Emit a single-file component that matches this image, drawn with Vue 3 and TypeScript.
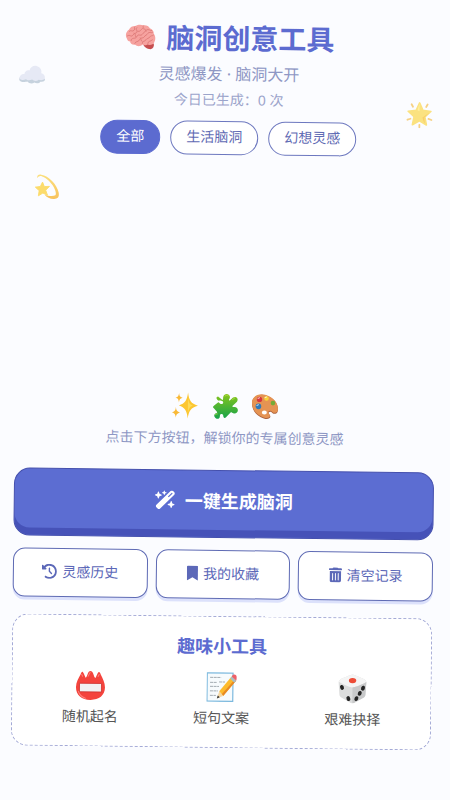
<script setup lang="ts">
import { ref } from 'vue'

const categories: string[] = ['全部', '生活脑洞', '幻想灵感']
const active = ref<string>('全部')
const count = ref<number>(0)

interface Action {
  label: string
  viewBox: string
  path: string
  kind: string
}

const actions: Action[] = [
  {
    label: '灵感历史',
    kind: 'history',
    viewBox: '0 0 512 512',
    path: 'M75 75L41 41C25.900 25.900 0 36.600 0 57.900V168c0 13.300 10.700 24 24 24H134.100c21.400 0 32.100-25.900 17-41l-30.800-30.800C155 85.500 203 64 256 64c106 0 192 86 192 192s-86 192-192 192c-40.800 0-78.600-12.700-109.700-34.400c-14.500-10.100-34.400-6.600-44.600 7.900s-6.600 34.400 7.900 44.600C151.200 495 201.700 512 256 512c141.400 0 256-114.600 256-256S397.400 0 256 0C185.300 0 121.300 28.700 75 75zm181 53c-13.300 0-24 10.700-24 24V256c0 6.400 2.500 12.500 7 17l72 72c9.400 9.400 24.600 9.400 33.900 0s9.400-24.600 0-33.900l-65-65V152c0-13.300-10.700-24-24-24z',
  },
  {
    label: '我的收藏',
    kind: 'bookmark',
    viewBox: '0 0 384 512',
    path: 'M0 512V48C0 21.49 21.49 0 48 0h288c26.51 0 48 21.49 48 48v464L192 400 0 512z',
  },
  {
    label: '清空记录',
    kind: 'trash',
    viewBox: '0 0 448 512',
    path: 'M135.200 17.700L128 32H32C14.300 32 0 46.300 0 64S14.300 96 32 96H416c17.700 0 32-14.300 32-32s-14.300-32-32-32H320l-7.200-14.300C307.400 6.800 296.300 0 284.200 0H163.800c-12.100 0-23.200 6.800-28.600 17.700zM416 128H32V448c0 35.300 28.700 64 64 64H352c35.300 0 64-28.700 64-64V128zM144 208V432c0 8.800-7.200 16-16 16s-16-7.200-16-16V208c0-8.800 7.200-16 16-16s16 7.200 16 16zm96 0V432c0 8.800-7.200 16-16 16s-16-7.200-16-16V208c0-8.800 7.200-16 16-16s16 7.200 16 16zm96 0V432c0 8.800-7.200 16-16 16s-16-7.200-16-16V208c0-8.800 7.200-16 16-16s16 7.200 16 16z',
  },
]

function run(kind: string): void {
  if (kind === 'trash') count.value = 0
}
</script>

<template>
  <main class="page">
    <svg class="deco cloud" viewBox="0 0 28 20" aria-hidden="true">
      <path d="M3 12C1 13 .7 16 3 17c2 1 5 .4 6.500 0 1.500 2 5 2.600 7 .8 2 1.400 5 .8 6-.8 3 .6 5-1 4.500-3z" fill="#c6d2de" />
      <path d="M1.500 14c0-3 2.500-5 5-4.500C6.500 7 9 5 11.500 5.800 12.500 2 16 .5 19 1.500c3.500 1 5 4 4.300 7C26 9 27.500 11.500 26.800 14c-2 1.800-4 1.600-6 1-2 1.800-5 1.500-6.500 0C11 16.500 9 15.500 8 14.800 5 16 3 15.500 1.500 14z" fill="#e6e9f5" />
    </svg>
    <svg class="deco dizzy" viewBox="0 0 28 28" aria-hidden="true">
      <defs>
        <linearGradient id="trail" x1="0" y1="0" x2="0" y2="1">
          <stop offset="0" stop-color="#fbe07e" />
          <stop offset="1" stop-color="#f8c25c" />
        </linearGradient>
      </defs>
      <path d="M3 5C2 2 4 .5 7 1c8 1 17 10 19 19 1 5-1 7-5 7-4 .2-8-2-10-4.500 4 1.500 9 2 11.500.5C25 21 19 7 8 3 6 2 4 2.500 3 5z" fill="url(#trail)" />
      <path d="M8.500 9l2 4.800 5.500-.3-4 4.200 2 5.300-5-2.200-4.800 3 .8-5.600L.8 14.500l5.400-.8z" fill="#fcdc6c" stroke="#fcdc6c" stroke-linejoin="round" />
    </svg>
    <svg class="deco star" viewBox="0 0 28 28" aria-hidden="true">
      <path d="M14 2.500l3.400 7.500 8 1-6 5.500 1.600 8-7-4-7 4 1.600-8-6-5.500 8-1z" fill="#fbe280" stroke="#fbe280" stroke-width="1.600" stroke-linejoin="round" />
      <path d="M17 17c2-1 4-3 7-5l-5 5c0 2 0 4 .5 6-1-1-2-4-2.500-6z" fill="#f8cf6a" />
      <path d="M14 3v8l-2-1z" fill="#fff0a0" />
      <path d="M6 4l1.400 2.500M22 4l-1.400 2.500M2 19.500l3-1M26 19.500l-3-1M14 24.500V27" fill="none" stroke="#f6d184" stroke-width="1.800" stroke-linecap="round" />
    </svg>

    <header class="header">
      <h1 class="title">
        <svg class="brain" viewBox="0 0 34 28" aria-hidden="true">
          <path d="M19 20c2 5 5 7 9 7 3-.5 4-3 3.500-6z" fill="#c64e50" />
          <path d="M2.500 16C0 12 2 8 4.500 6.500 6 3 9 2 11.500 2.200 14 .5 18 .5 20 1.500c3-.5 6 .8 7 3 3 .8 4.500 3.500 4.300 6 2.500 3 2 7 .7 9-1 3-5 3.500-7.500 2.500-2 1.500-4 1-5 .2-2.500 2.500-6.500 2-8 .3C8 23 6 21 6 19c-2 0-3-1.300-3.500-3z" fill="#f6a29f" />
          <path d="M5 8c2-2 3 1 5-1s-1-3 1-4M3 13c3-2 4 2 6-1s3-1 4-3-2-3 0-5M14 8c3 1 3-2 5-3s0-2 1-3M7 18c0-3 3-2 5-3s1-4 4-3 3-2 5-3 1-3 4-3 2 2 4 1M11 21c1-3 4-1 5-4s4-1 5-3 3-2 4-4 4 0 5-1M19 21c0-3 3-2 4-4s3-1 4-3 3-1 4-2M25 21c0-3 3-2 5-4M10 10c2 0 1 2 2 4M20 5c1 1 3 0 3 3M17 15c1 1 0 3 2 4" fill="none" stroke="#de7c7a" stroke-width="1" stroke-linecap="round" />
        </svg>
        <span>脑洞创意工具</span>
      </h1>
      <p class="subtitle">灵感爆发 · 脑洞大开</p>
      <p class="count">今日已生成：{{ count }} 次</p>
      <nav class="tabs">
        <button
          v-for="c in categories"
          :key="c"
          type="button"
          class="tab"
          :class="{ active: active === c }"
          @click="active = c"
        >{{ c }}</button>
      </nav>
    </header>

    <section class="stage">
      <div class="emojis" aria-hidden="true">
        <svg viewBox="0 0 28 28">
          <path d="M17 1c1 8 3 11 10 13-7 2-9 5-10 13-1-8-3-11-9-13 6-2 8-5 9-13z" fill="#fcc630" />
          <path d="M17 5c.5 6 1.500 8 5 9-3 1-4 3-5 8z" fill="#fddb58" />
          <path d="M8 1.500c.4 3 1 4 3.800 4.700C9 7 8.400 8 8 11c-.4-3-1-4-3.800-4.800C7 5.500 7.600 4.500 8 1.500zM5 15.500c.4 3.500 1.200 4.600 4.500 5.500-3.300.8-4.100 2-4.500 5.300C4.600 23 3.800 21.800.8 21c3-.9 3.800-2 4.200-5.500z" fill="#f9b937" />
        </svg>
        <svg viewBox="0 0 28 28">
          <defs>
            <linearGradient id="puzzle" x1="0" y1="0" x2="0" y2="1">
              <stop offset="0" stop-color="#86c51c" />
              <stop offset="1" stop-color="#16a34b" />
            </linearGradient>
          </defs>
          <path d="M7 4.500L11.500 8c1-.5.3-2 .8-3.500C13 2 16 1 18 3c1.500 1.500 1 3.300 0 4.500-.3.800.2 1 .8 1L22 5.500c3-2 6 1 4 4L21.500 14c-.2 1 .5 1 1.500.8 2.500-.3 4 1.200 4 3.200s-2 4-4.500 3.200c-1-.5-2-1.500-2.500-1L15 25.500c-1.500 1-2.500 0-2.500-1.500 0-1.500-1-2.300-2-2-1.500.3-1.300 1.500-1.500 3-.3 2-2.500 2.500-4.300 1C3 24.500 3 22.500 4.500 21.500c1-.6 2-.4 1.800-1.500L2.500 16c-1-1 0-1.600 1-2.600L7 10.500c1-.5 1.500 1 2.800 1.500 1.700.5 3-.8 2.200-2.500-1-1.500-3.500 0-5.500-1.500-1.500-1.500-1.500-3 .5-3.500z" fill="url(#puzzle)" />
          <path d="M14 4c1.500-1.500 3-1 3.500 0M4.500 23c.5-1 1-1 2-1M21.500 7.500L24 5.700" fill="none" stroke="#b4dc45" stroke-width=".8" stroke-linecap="round" />
        </svg>
        <svg viewBox="0 0 28 28">
          <path d="M1 11C1 4 8 1 15 3c8 2 13 9 12 15-.5 3.500-4 4-5.500 2.300-1-1-2.500-1.600-3.500-.5-1 1.200 1.500 2.200 1.600 4.200.1 2.500-3.600 3-6.600 2C6 24 1 18 1 11z" fill="#ad633f" />
          <path d="M1 10C1 3.500 8 .5 15 2.500 22.500 4.500 27.500 11 27 17c-.5 3.500-4 4-5.500 2.300-1-1-3-1.600-4-.3-1.200 1.500 1.500 2.200 1.600 4.200.1 2.300-3.100 2.800-6.100 1.800C6 23 1 17 1 10z" fill="#e59353" />
          <circle cx="8.500" cy="7" r="2.700" fill="#d8373c" />
          <circle cx="15.500" cy="6" r="2.300" fill="#f8d43b" />
          <circle cx="22" cy="10.500" r="2.300" fill="#75aa38" />
          <circle cx="7.500" cy="14" r="2.800" fill="#2e79ba" />
          <ellipse cx="13.500" cy="20" rx="2.500" ry="2" fill="#fff" />
          <path d="M7 6l1.500-.6M14 5l1.500-.5M6 13l1.500-.6" stroke="#fff" stroke-width=".8" stroke-linecap="round" />
        </svg>
      </div>
      <p class="hint">点击下方按钮，解锁你的专属创意灵感</p>
    </section>

    <button type="button" class="generate" @click="count++">
      <svg viewBox="0 0 544 512" aria-hidden="true">
        <path fill="currentColor" d="M234.700 42.700L197 56.800c-3 1.100-5 4-5 7.200s2 6.100 5 7.200l37.700 14.100L248.800 123c1.100 3 4 5 7.200 5s6.100-2 7.200-5l14.100-37.700L315 71.200c3-1.100 5-4 5-7.200s-2-6.100-5-7.200L277.300 42.700 263.200 5c-1.100-3-4-5-7.200-5s-6.100 2-7.200 5L234.700 42.700zM46.100 395.400c-18.700 18.700-18.700 49.100 0 67.900l34.600 34.600c18.700 18.700 49.100 18.700 67.900 0L529.900 116.500c18.700-18.700 18.700-49.100 0-67.900L495.300 14.100c-18.700-18.700-49.100-18.700-67.900 0L46.100 395.400zM484.600 82.600l-105 105-23.300-23.300 105-105 23.300 23.300zM7.500 117.200C3 118.900 0 123.200 0 128s3 9.100 7.500 10.800L64 160l21.200 56.500c1.700 4.500 6 7.500 10.800 7.500s9.100-3 10.800-7.500L128 160l56.500-21.200c4.500-1.700 7.500-6 7.500-10.800s-3-9.100-7.500-10.800L128 96 106.800 39.500C105.100 35 100.800 32 96 32s-9.100 3-10.800 7.500L64 96 7.500 117.200zm352 256c-4.500 1.700-7.500 6-7.500 10.800s3 9.100 7.500 10.800L416 416l21.200 56.500c1.700 4.500 6 7.500 10.800 7.500s9.100-3 10.800-7.500L480 416l56.500-21.200c4.500-1.700 7.500-6 7.500-10.800s-3-9.100-7.500-10.800L480 352l-21.200-56.500c-1.700-4.500-6-7.500-10.800-7.500s-9.100 3-10.800 7.500L416 352l-56.500 21.200z" />
      </svg>
      <span>一键生成脑洞</span>
    </button>

    <div class="actions">
      <button v-for="a in actions" :key="a.kind" type="button" class="action" @click="run(a.kind)">
        <svg :class="a.kind" :viewBox="a.viewBox" aria-hidden="true">
          <path fill="currentColor" :d="a.path" />
        </svg>
        <span>{{ a.label }}</span>
      </button>
    </div>

    <section class="tools">
      <h2 class="tools-title">趣味小工具</h2>
      <div class="tool-grid">
        <button type="button" class="tool">
          <svg viewBox="0 0 30 30" aria-hidden="true">
            <path d="M5 4c.8-3 2-3.500 3-1l2 4.500c1-.2 1.300-2 2.300-4.500C13.500-.2 16-.2 17.500 3c1 2.500 1.400 4.300 2.400 4.500l2-4.500c1-2.500 2.500-2 3.200 1 2 4 4.400 8 4.400 13 0 8-6 12.500-14.500 12.500S.5 25 .5 17c0-5 2.500-9 4.500-13z" fill="#f4443d" />
            <path d="M3 21c1 4 4 6 7 7M12.500 6l2-4M7 6l-1-2M22.500 6l1-2" fill="none" stroke="#ff8179" stroke-width="1" stroke-linecap="round" />
            <path d="M4 13h22v8.500H4z" fill="#f2f2f2" stroke="#cc302e" stroke-width=".8" />
          </svg>
          <span>随机起名</span>
        </button>
        <button type="button" class="tool">
          <svg viewBox="0 0 30 30" aria-hidden="true">
            <path d="M.6 1h25.800v28.300H.6z" fill="#f7fbfd" stroke="#7cb9de" stroke-width="1.200" />
            <path d="M3.500 5.500h11M3.500 10.500h7M12.500 10h6M3.500 14.500h9M3.500 19h8M3.500 23.500h6" stroke="#9aa3aa" stroke-width=".9" stroke-dasharray="3 .6" />
            <path d="M10.500 26.500l2.300-7.200 5 4.300z" fill="#f5d8a5" />
            <path d="M12.800 19.300L25 4.500l4.500 4.200L17 23.800z" fill="#fdbb2d" />
            <path d="M15.500 22L28 7.500l1.500 1.200L17 23.800z" fill="#e88924" />
            <path d="M23.500 6.300L25.200 4.300l4.500 4.200-1.800 2.200z" fill="#a9bec7" />
            <path d="M25.200 4.300c1-2.200 3-2.400 4.500-.9 1.300 1.400 1.200 3.500 0 5.100z" fill="#ed6068" />
            <path d="M10.500 26.500l.9-3 2 1.800z" fill="#333" />
          </svg>
          <span>短句文案</span>
        </button>
        <button type="button" class="tool">
          <svg viewBox="0 0 30 30" aria-hidden="true">
            <path d="M15 1c1.500 0 11 4.200 12.500 5.200 1 .7 1.500 1.800 1.400 3L28 21c-.1 1.500-.8 2.400-2 3.100L17 29.200c-1.400.7-2.600.7-4 0L4 24.100c-1.200-.7-1.900-1.600-2-3.100L1.100 9.200c-.1-1.200.4-2.300 1.400-3C4 5.200 13.500 1 15 1z" fill="#dcdddd" />
            <path d="M15 1c1.500 0 11 4.200 12.500 5.200.7.500 1.100 1.200 1.100 1.900C28 9.500 17.500 14 15 14S2 9.500 1.400 8.100c0-.7.4-1.400 1.100-1.900C4 5.200 13.500 1 15 1z" fill="#f5f5f5" />
            <path d="M15 14c2.500 0 12.500-4.300 13.700-5.700L28 21c-.1 1.500-.8 2.400-2 3.100L17 29.200c-.7.400-1.300.5-2 .5z" fill="#c8c9ca" />
            <ellipse cx="15" cy="7" rx="3.700" ry="2.600" fill="#ed4c37" />
            <g fill="#242424">
              <ellipse cx="4.500" cy="14" rx="1.900" ry="2.500" transform="rotate(-20 4.500 14)" />
              <ellipse cx="11" cy="25" rx="1.900" ry="2.500" transform="rotate(-20 11 25)" />
              <ellipse cx="25.500" cy="14.500" rx="1.900" ry="2.500" transform="rotate(20 25.500 14.500)" />
              <ellipse cx="22.300" cy="19.700" rx="1.900" ry="2.500" transform="rotate(20 22.300 19.700)" />
              <ellipse cx="19" cy="25" rx="1.900" ry="2.500" transform="rotate(20 19 25)" />
            </g>
          </svg>
          <span>艰难抉择</span>
        </button>
      </div>
    </section>
  </main>
</template>

<style>
body {
  margin: 0;
  background: #fbfcff;
  overflow: hidden;
}
</style>

<style scoped>
.page {
  box-sizing: border-box;
  position: relative;
  display: flex;
  flex-direction: column;
  min-height: 100vh;
  padding: 18px 15px 52px;
  background: #fbfcff;
  font-family: "Noto Sans", "Noto Sans CJK SC", sans-serif;
  color: #5c6bd0;
  transform: rotate(0.7deg);
}

button {
  font: inherit;
  margin: 0;
  cursor: pointer;
}

svg {
  display: block;
  flex: none;
}

.deco {
  position: absolute;
}

.cloud {
  top: 67px;
  left: 14px;
  width: 28px;
  height: 20px;
}

.dizzy {
  top: 175px;
  left: 32px;
  width: 26px;
  height: 28px;
}

.star {
  top: 98px;
  right: 20px;
  width: 28px;
  height: 28px;
}

.header {
  display: flex;
  flex-direction: column;
  align-items: center;
}

.title {
  display: flex;
  align-items: center;
  gap: 10px;
  margin: 0;
  font-size: 28px;
  line-height: 40px;
  font-weight: 700;
}

.brain {
  width: 32px;
  height: 26px;
}

.subtitle {
  margin: 4px 0 0;
  font-size: 16px;
  line-height: 24px;
  color: #8e97c4;
}

.count {
  margin: 4px 0 0;
  font-size: 14px;
  line-height: 20px;
  color: #9ba4cb;
}

.tabs {
  display: flex;
  gap: 10px;
  margin-top: 11px;
}

.tab {
  box-sizing: border-box;
  height: 34px;
  padding: 0 15px 2px;
  border: 1px solid #6d78bf;
  border-radius: 17px;
  background: #fff;
  color: #5f6bb4;
  font-size: 14px;
  line-height: 20px;
}

.tab.active {
  border-color: #5c6bd0;
  background: #5c6bd0;
  color: #fff;
}

.stage {
  flex: 1;
  display: flex;
  flex-direction: column;
  align-items: center;
  justify-content: flex-end;
  padding-bottom: 20px;
}

.emojis {
  display: flex;
  gap: 12px;
}

.emojis svg {
  width: 28px;
  height: 28px;
}

.hint {
  margin: 6px 0 0;
  font-size: 14px;
  line-height: 24px;
  color: #8e97c4;
}

.generate {
  display: flex;
  align-items: center;
  justify-content: center;
  gap: 10px;
  height: 68px;
  padding: 0 16px 7px;
  border: 1px solid #4550ad;
  border-radius: 16px;
  background: #5c6dd2;
  box-shadow: inset 0 -7px 0 #4652b8;
  color: #fff;
  font-size: 18px;
  line-height: 24px;
  font-weight: 700;
}

.generate svg {
  width: 20px;
  height: 19px;
}

.actions {
  display: grid;
  grid-template-columns: repeat(3, 1fr);
  gap: 8px;
  margin-top: 12px;
}

.action {
  display: flex;
  align-items: center;
  justify-content: center;
  gap: 5px;
  box-sizing: border-box;
  height: 49px;
  padding: 0 0 2px;
  border: 1px solid #5f6bb4;
  border-radius: 12px;
  background: #fff;
  box-shadow: 0 3px 0 #dce1fb;
  color: #5c68b8;
  font-size: 14px;
  line-height: 20px;
}

.action svg {
  height: 15px;
}

.tools {
  margin-top: 17px;
  padding: 15px 16px 19px;
  border: 1px dashed #a3a9d6;
  border-radius: 16px;
  background: #fff;
}

.tools-title {
  margin: 0;
  font-size: 18px;
  line-height: 28px;
  font-weight: 700;
  text-align: center;
}

.tool-grid {
  display: grid;
  grid-template-columns: repeat(3, 1fr);
  gap: 8px;
  margin-top: 12px;
}

.tool {
  display: flex;
  flex-direction: column;
  align-items: center;
  gap: 6px;
  padding: 0;
  border: 0;
  background: none;
  color: #555;
  font-size: 14px;
  line-height: 20px;
}

.tool svg {
  width: 30px;
  height: 30px;
}
</style>
